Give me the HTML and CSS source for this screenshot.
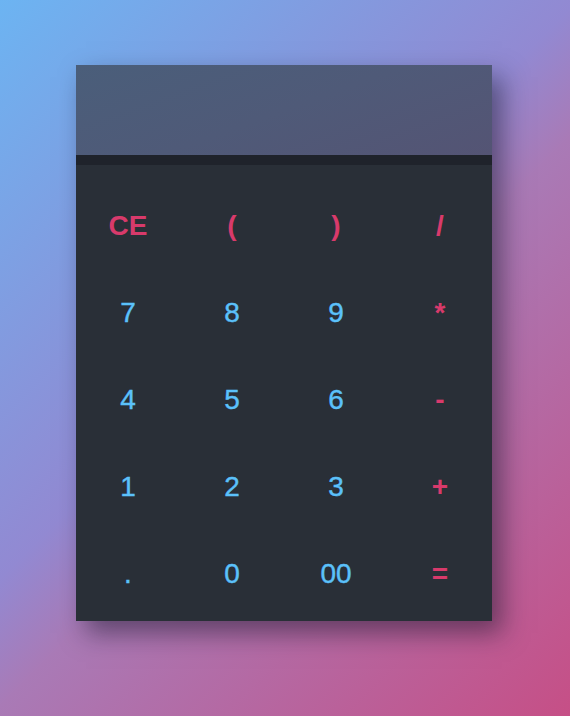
FILE: index.html
```html
<!DOCTYPE html>
<html>
<head>
<meta charset="utf-8">
<link rel="stylesheet" href="styles.css">
</head>
<body>
<div class="calc">
  <div class="display"></div>
  <div class="divider"></div>
  <div class="keys">
    <div class="key op">CE</div>
    <div class="key op">(</div>
    <div class="key op">)</div>
    <div class="key op">/</div>
    <div class="key num">7</div>
    <div class="key num">8</div>
    <div class="key num">9</div>
    <div class="key op">*</div>
    <div class="key num">4</div>
    <div class="key num">5</div>
    <div class="key num">6</div>
    <div class="key op">-</div>
    <div class="key num">1</div>
    <div class="key num">2</div>
    <div class="key num">3</div>
    <div class="key op">+</div>
    <div class="key num">.</div>
    <div class="key num">0</div>
    <div class="key num">00</div>
    <div class="key op">=</div>
  </div>
</div>
</body>
</html>
```

FILE: styles.css
```css
html, body {
  margin: 0;
  height: 100%;
}
body {
  background: linear-gradient(135deg, #6cb4f2 0%, #9289d2 45%, #a97ab6 55%, #c64f86 100%);
  font-family: "Liberation Sans", Arial, sans-serif;
  display: flex;
  justify-content: center;
  align-items: flex-start;
  padding-top: 65px;
  box-sizing: border-box;
}
.calc {
  width: 416px;
  margin-left: -2px;
  box-shadow: 10px 12px 24px rgba(20, 20, 40, 0.5);
}
.display {
  height: 90px;
  background: linear-gradient(160deg, #4a5e7a 0%, #4f5a78 50%, #545474 100%);
}
.divider {
  height: 10px;
  background: #1f232b;
}
.keys {
  background: #292f37;
  display: grid;
  grid-template-columns: repeat(4, 104px);
  grid-auto-rows: 87px;
  padding: 17px 0 4px;
}
.key {
  display: flex;
  align-items: center;
  justify-content: center;
  font-size: 28px;
}
.num {
  color: #5bc1fa;
  -webkit-text-stroke: 0.4px #5bc1fa;
}
.op {
  color: #d83a6b;
  font-weight: bold;
}
```
